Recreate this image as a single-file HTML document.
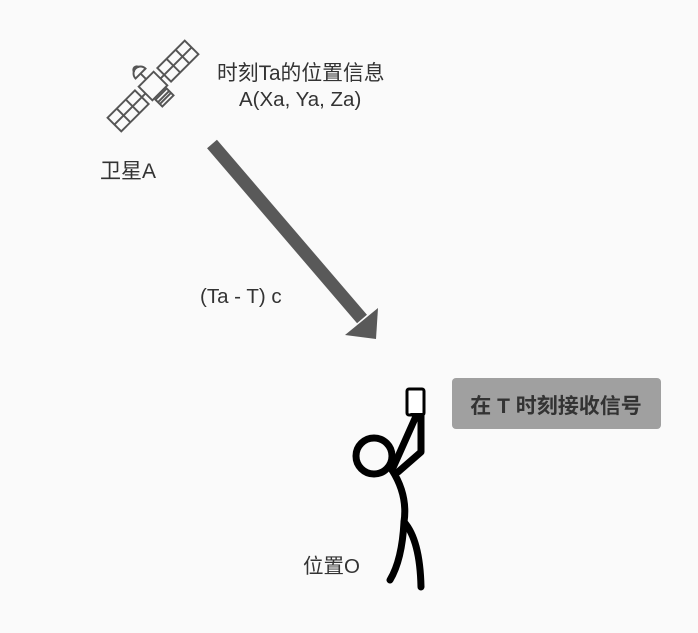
<!DOCTYPE html>
<html><head><meta charset="utf-8"><style>
html,body{margin:0;padding:0;background:#fafafa;}
svg{display:block}
text{font-family:"Liberation Sans","Noto Sans CJK SC",sans-serif;fill:#333;}
</style></head><body>
<svg width="698" height="633" viewBox="0 0 698 633" xmlns="http://www.w3.org/2000/svg">
<rect width="698" height="633" fill="#fafafa"/>
<!-- satellite -->
<g transform="translate(153,86) rotate(-45) scale(0.88)" fill="none" stroke="#555" stroke-width="2.2">
  <rect x="18" y="-11" width="44" height="22"/>
  <line x1="32.7" y1="-11" x2="32.7" y2="11"/><line x1="47.3" y1="-11" x2="47.3" y2="11"/><line x1="18" y1="0" x2="62" y2="0"/>
  <rect x="-62" y="-11" width="44" height="22"/>
  <line x1="-32.7" y1="-11" x2="-32.7" y2="11"/><line x1="-47.3" y1="-11" x2="-47.3" y2="11"/><line x1="-62" y1="0" x2="-18" y2="0"/>
  <line x1="12" y1="0" x2="18" y2="0"/><line x1="-18" y1="0" x2="-12" y2="0"/>
  <rect x="-12" y="-11" width="24" height="22" fill="#fafafa"/>
  <rect x="-9" y="13" width="18" height="11" fill="#fafafa"/>
  <line x1="-9" y1="17" x2="9" y2="17"/><line x1="-9" y1="20" x2="9" y2="20"/>
  <path d="M-8,-20 A8,8 0 0 1 8,-20 Z" fill="#fafafa"/>
  <line x1="0" y1="-20" x2="0" y2="-11"/>
  <path d="M-4,-26 A4,4 0 0 1 4,-26"/>
</g>
<text x="217" y="80" font-size="20.8">时刻Ta的位置信息</text>
<text x="239" y="106" font-size="20.5">A(Xa, Ya, Za)</text>
<text x="100" y="178" font-size="21">卫星A</text>
<!-- arrow -->
<line x1="212" y1="144" x2="362" y2="319" stroke="#595959" stroke-width="13"/>
<polygon points="345,335 378,308 376,339" fill="#595959"/>
<text x="200" y="303" font-size="20.5">(Ta - T) c</text>
<!-- box -->
<rect x="452" y="378" width="209" height="51" rx="4" fill="#a0a0a0"/>
<text x="556" y="413" font-size="21" font-weight="bold" text-anchor="middle" style="fill:#333">在 T 时刻接收信号</text>
<!-- person -->
<g fill="none" stroke="#000" stroke-width="7" stroke-linecap="round" stroke-linejoin="round">
  <circle cx="374" cy="456" r="18"/>
  <path d="M417,414 L392,470"/>
  <path d="M421,416 L421,452 L398,472"/>
  <path d="M392,470 Q408,495 404,522 Q402,560 390,580"/>
  <path d="M404,522 Q420,540 421,587"/>
</g>
<rect x="407" y="389" width="17" height="26" fill="#fff" stroke="#000" stroke-width="3" rx="2"/>
<path d="M410,413 L424,413 L421,420 Z" fill="#000"/>
<text x="303" y="573" font-size="20.5">位置O</text>
</svg>
</body></html>
